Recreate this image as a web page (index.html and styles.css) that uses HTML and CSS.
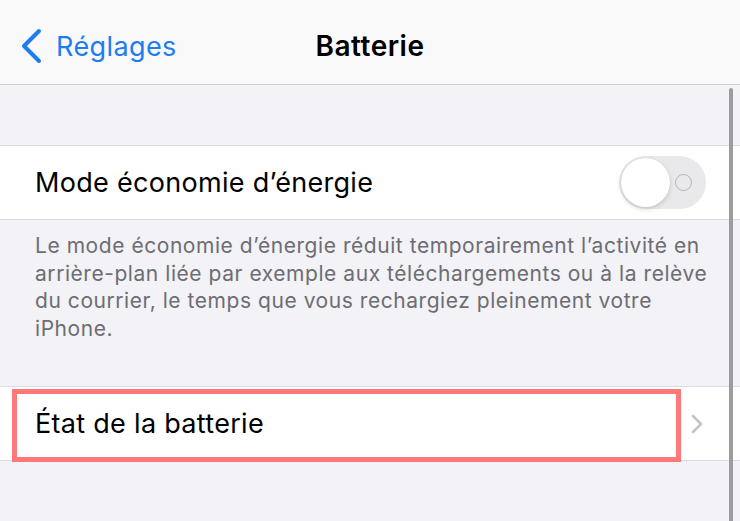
FILE: index.html
```html
<!DOCTYPE html>
<html lang="fr">
<head>
<meta charset="utf-8">
<title>Batterie</title>
<link rel="stylesheet" href="styles.css">
</head>
<body>
<div class="screen">
  <header class="nav">
    <div class="back">
      <svg class="back-chevron" width="24" height="36" viewBox="0 0 24 36">
        <polyline points="19,3 4,18 19,33" fill="none" stroke="#1e7cf2" stroke-width="4" stroke-linecap="round" stroke-linejoin="round"/>
      </svg>
      <span class="back-label">Réglages</span>
    </div>
    <h1 class="title">Batterie</h1>
  </header>
  <main class="content">
    <section class="group first">
      <div class="row">
        <span class="row-label">Mode économie d’énergie</span>
        <div class="toggle">
          <div class="knob"></div>
          <div class="off-ring"></div>
        </div>
      </div>
    </section>
    <p class="footer">Le mode économie d’énergie réduit temporairement l’activité en arrière-plan liée par exemple aux téléchargements ou à la relève du courrier, le temps que vous rechargiez pleinement votre iPhone.</p>
    <section class="group">
      <div class="row link">
        <span class="row-label">État de la batterie</span>
        <svg class="chevron" width="14" height="20" viewBox="0 0 14 20">
          <polyline points="3,2 11,10 3,18" fill="none" stroke="#c4c4c8" stroke-width="2.6" stroke-linecap="round" stroke-linejoin="round"/>
        </svg>
        <div class="highlight"></div>
      </div>
    </section>
  </main>
  <div class="scrollbar"></div>
</div>
</body>
</html>
```
FILE: styles.css
```css
* { box-sizing: border-box; }
html, body { margin: 0; padding: 0; }
body {
  width: 740px;
  height: 521px;
  overflow: hidden;
  background: #f2f2f7;
  font-family: Inter, "Noto Sans", "Liberation Sans", sans-serif;
}
.screen {
  position: relative;
  width: 740px;
  height: 521px;
  overflow: hidden;
}
.nav {
  position: relative;
  height: 85px;
  background: #f9f9f9;
  border-bottom: 1px solid #cfcfd3;
  display: flex;
  align-items: center;
  justify-content: center;
}
.back {
  position: absolute;
  left: 20px;
  top: 28px;
  display: flex;
  align-items: center;
  gap: 12px;
}
.back-label {
  color: #1e7cf2;
  font-size: 27px;
  letter-spacing: 0.4px;
}
.title {
  margin: 0;
  font-size: 28px;
  font-weight: 600;
  letter-spacing: 0.5px;
  color: #000;
  padding-top: 8px;
}
.content {
  padding-top: 60px;
}
.group {
  background: #fff;
  border-top: 1px solid #dcdce0;
  border-bottom: 1px solid #dcdce0;
}
.row {
  position: relative;
  height: 73px;
  display: flex;
  align-items: center;
  justify-content: space-between;
  padding: 0 35px 0 35px;
}
.row-label {
  font-size: 27px;
  letter-spacing: 0.3px;
  color: #000;
}
.toggle {
  position: relative;
  width: 87px;
  height: 53px;
  border-radius: 27px;
  background: #e9e9eb;
  margin-right: -1px;
}
.knob {
  position: absolute;
  left: 2px;
  top: 2px;
  width: 49px;
  height: 49px;
  border-radius: 50%;
  background: #fff;
  box-shadow: 0 2px 5px rgba(0,0,0,0.15), 0 0 1px rgba(0,0,0,0.12);
}
.off-ring {
  position: absolute;
  right: 14px;
  top: 18px;
  width: 17px;
  height: 17px;
  border-radius: 50%;
  border: 1.6px solid #b3b3b7;
}
.footer {
  margin: 0;
  padding: 12px 28px 44px 35px;
  font-size: 21px;
  line-height: 27.5px;
  letter-spacing: 0.55px;
  color: #6d6d72;
}
.chevron {
  margin-right: 1px;
}
.highlight {
  position: absolute;
  left: 12px;
  top: 2px;
  width: 669px;
  height: 73px;
  border: 5px solid #fd7878;
  pointer-events: none;
}
.scrollbar {
  position: absolute;
  left: 729px;
  top: 88px;
  width: 4px;
  height: 440px;
  border-radius: 2px;
  background: #9c9c9f;
}
```
